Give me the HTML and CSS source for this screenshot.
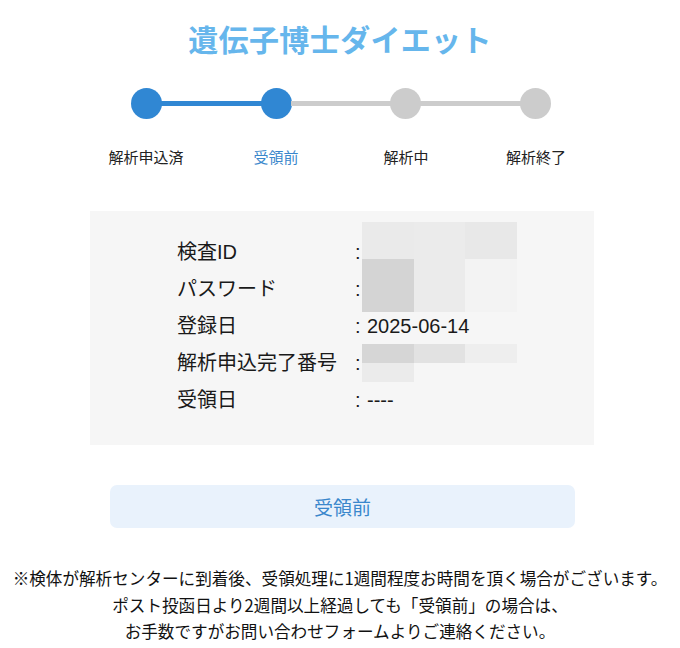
FILE: index.html
```html
<!DOCTYPE html>
<html lang="ja">
<head>
<meta charset="utf-8">
<title>遺伝子博士ダイエット</title>
<link rel="stylesheet" href="styles.css">
</head>
<body>
<h1 class="title">遺伝子博士ダイエット</h1>

<div class="stepper">
  <div class="track">
    <span class="dot done"></span>
    <span class="bar done"></span>
    <span class="dot done"></span>
    <span class="bar"></span>
    <span class="dot"></span>
    <span class="bar"></span>
    <span class="dot"></span>
  </div>
  <ul class="labels">
    <li>解析申込済</li>
    <li class="current">受領前</li>
    <li>解析中</li>
    <li>解析終了</li>
  </ul>
</div>

<section class="card">
  <dl class="info">
    <div class="row"><dt>検査ID</dt><dd><span class="colon">:</span></dd></div>
    <div class="row"><dt>パスワード</dt><dd><span class="colon">:</span></dd></div>
    <div class="row"><dt>登録日</dt><dd><span class="colon">:</span><span class="val">2025-06-14</span></dd></div>
    <div class="row"><dt>解析申込完了番号</dt><dd><span class="colon">:</span></dd></div>
    <div class="row"><dt>受領日</dt><dd><span class="colon">:</span><span class="val">----</span></dd></div>
  </dl>
  <div class="mask mask-top">
    <span class="px c1"></span><span class="px c2"></span><span class="px c3"></span>
    <span class="px c4"></span><span class="px c5"></span><span class="px c6"></span>
  </div>
  <div class="mask mask-bottom">
    <span class="px c7"></span><span class="px c8"></span><span class="px c9"></span>
    <span class="px c10"></span><span class="px"></span><span class="px"></span>
  </div>
</section>

<div class="status">受領前</div>

<p class="notes">※検体が解析センターに到着後、受領処理に1週間程度お時間を頂く場合がございます。<br>ポスト投函日より2週間以上経過しても「受領前」の場合は、<br>お手数ですがお問い合わせフォームよりご連絡ください。</p>
</body>
</html>
```

FILE: styles.css
```css
* { box-sizing: border-box; }

body {
  margin: 0;
  width: 680px;
  background: #ffffff;
  font-family: "Liberation Sans", "Noto Sans CJK JP", sans-serif;
  color: #1a1a1a;
}

.title {
  margin: 18px 0 0;
  text-align: center;
  font-family: "Noto Sans CJK JP", sans-serif;
  font-size: 30px;
  line-height: 40px;
  font-weight: 700;
  letter-spacing: 0.4px;
  color: #66b6ec;
}

.stepper {
  margin-top: 30px;
  display: flex;
  flex-direction: column;
  align-items: center;
  padding-left: 2px;
}

.track {
  width: 420px;
  display: flex;
  align-items: center;
}

.dot {
  flex: 0 0 31px;
  height: 31px;
  border-radius: 50%;
  background: #cccccc;
}
.dot.done { background: #3087d3; }

.bar {
  flex: 1;
  height: 5px;
  background: #cccccc;
  margin: 0 -1px;
}
.bar.done { background: #3087d3; }

.labels {
  list-style: none;
  margin: 28px 0 0;
  padding: 0;
  width: 520px;
  display: grid;
  grid-template-columns: repeat(4, 1fr);
  font-family: "Noto Sans CJK JP", sans-serif;
  font-size: 15px;
  line-height: 20px;
  color: #222222;
  text-align: center;
}
.labels .current { color: #3a87cc; }

.card {
  position: relative;
  margin: 44px 0 0 90px;
  width: 504px;
  height: 234px;
  background: #f6f6f6;
  padding: 23px 0 0 87px;
}

.info {
  margin: 0;
  font-size: 20px;
  line-height: 37px;
  color: #1a1a1a;
}

.row { display: flex; }
.row dt { width: 178px; }
.row dd { margin: 0; display: flex; }
.colon { width: 8px; }
.val { margin-left: 4px; }

.mask {
  position: absolute;
  left: 272px;
  width: 155px;
  display: grid;
  grid-template-columns: repeat(3, 1fr);
}
.mask-top { top: 11px; grid-template-rows: 37px 53px; }
.mask-bottom { top: 133px; grid-template-rows: 19px 19px; }

.c1 { background: #eaeaea; }
.c2 { background: #ebebeb; }
.c3 { background: #e8e8e8; }
.c4 { background: #d4d4d4; }
.c5 { background: #ebebeb; }
.c6 { background: #f3f3f3; }
.c7 { background: #d6d6d6; }
.c8 { background: #e2e2e2; }
.c9 { background: #eeeeee; }
.c10 { background: #ebebeb; }

.status {
  margin: 40px 0 0 110px;
  width: 465px;
  height: 43px;
  border-radius: 7px;
  background: #e9f2fc;
  color: #3a87cc;
  font-family: "Noto Sans CJK JP", sans-serif;
  font-size: 19px;
  line-height: 43px;
  text-align: center;
}

.notes {
  margin: 37px 0 0;
  text-align: center;
  font-family: "Noto Sans CJK JP", sans-serif;
  font-size: 16.6px;
  line-height: 26.5px;
  color: #111111;
}
```
